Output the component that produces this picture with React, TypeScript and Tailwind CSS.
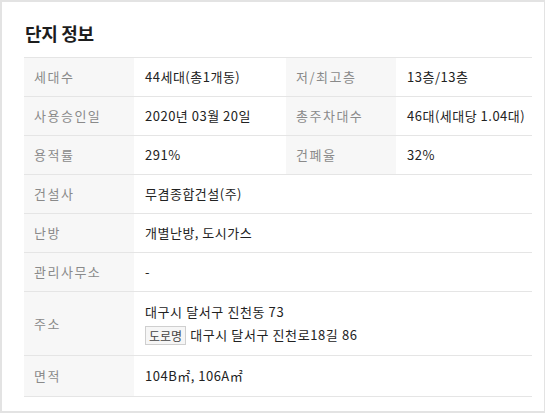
import React from 'react';

const font = { fontFamily: '"Noto Sans CJK KR", "Noto Sans", sans-serif' };

interface Cell {
    label: string;
    value: React.ReactNode;
}

// rows with two label/value pairs or a single wide one
const rows: Cell[][] = [
    [
        { label: '세대수', value: '44세대(총1개동)' },
        { label: '저/최고층', value: '13층/13층' },
    ],
    [
        { label: '사용승인일', value: '2020년 03월 20일' },
        { label: '총주차대수', value: '46대(세대당 1.04대)' },
    ],
    [
        { label: '용적률', value: '291%' },
        { label: '건폐율', value: '32%' },
    ],
    [{ label: '건설사', value: '무겸종합건설(주)' }],
    [{ label: '난방', value: '개별난방, 도시가스' }],
    [{ label: '관리사무소', value: '-' }],
];

const Label = ({ children, tall }: { children: React.ReactNode; tall?: boolean }) => (
    <div
        className={`w-[110px] shrink-0 bg-[#f7f7f7] pl-[10px] flex items-center text-[13px] tracking-[1.5px] text-[#8a8a8a] ${
            tall ? 'h-[63px]' : 'h-[38px]'
        }`}
    >
        {children}
    </div>
);

export default function App() {
    return (
        <div
            className="w-[545px] h-[413px] bg-white border-l-2 border-t-2 border-r border-b-2 border-[#e3e3e3] overflow-hidden"
            style={font}
        >
            <div className="pl-[22px] pr-[12px] pt-[19px]">
                <h2 className="pl-[1px] text-[18px] font-bold leading-[24px] text-[#1d1d1d] tracking-[-0.3px]">단지 정보</h2>

                <div className="mt-[12px] border-t border-[#e5e5e5]">
                    {rows.map((row, i) => (
                        <div key={i} className="flex border-b border-[#e5e5e5]">
                            <Label>{row[0].label}</Label>
                            <div
                                className={`${
                                    row.length > 1 ? 'w-[152px]' : 'flex-1'
                                } shrink-0 pl-[11px] flex items-center text-[13px] tracking-[0.5px] text-[#222]`}
                            >
                                {row[0].value}
                            </div>
                            {row[1] && (
                                <>
                                    <Label>{row[1].label}</Label>
                                    <div className="flex-1 pl-[11px] flex items-center text-[13px] tracking-[0.5px] text-[#222]">
                                        {row[1].value}
                                    </div>
                                </>
                            )}
                        </div>
                    ))}

                    {/* address */}
                    <div className="flex border-b border-[#e5e5e5]">
                        <Label tall>주소</Label>
                        <div className="flex-1 pl-[11px] flex flex-col justify-center gap-[3px] text-[13px] tracking-[0.6px] text-[#222] leading-[20px]">
                            <div>대구시 달서구 진천동 73</div>
                            <div className="flex items-center gap-[4px]">
                                <span className="border border-[#cfcfcf] bg-[#f6f6f6] px-[3px] text-[12px] leading-[17px] tracking-normal text-[#444]">
                                    도로명
                                </span>
                                <span>대구시 달서구 진천로18길 86</span>
                            </div>
                        </div>
                    </div>

                    <div className="flex border-b border-[#e5e5e5]">
                        <div className="w-[110px] shrink-0 bg-[#f7f7f7] pl-[10px] h-[40px] flex items-center text-[13px] tracking-[1.5px] text-[#8a8a8a]">
                            면적
                        </div>
                        <div className="flex-1 pl-[11px] flex items-center text-[13px] tracking-[0.5px] text-[#222]">
                            104B㎡, 106A㎡
                        </div>
                    </div>
                </div>
            </div>
        </div>
    );
}
